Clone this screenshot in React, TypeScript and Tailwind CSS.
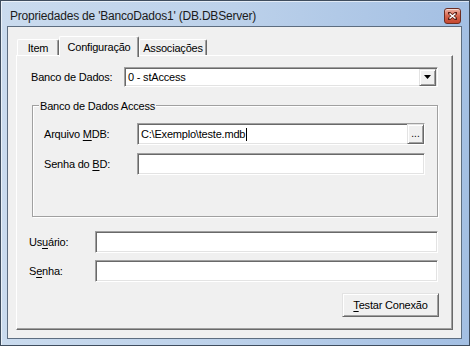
import React from 'react';

const sunken =
  'bg-white border border-t-[#a0a0a0] border-l-[#a0a0a0] border-b-white border-r-white shadow-[inset_1px_1px_0_#696969,inset_-1px_-1px_0_#e3e3e3]';
const raised =
  'bg-[#f0f0f0] border border-t-[#e3e3e3] border-l-[#e3e3e3] border-b-[#696969] border-r-[#696969] shadow-[inset_1px_1px_0_#ffffff,inset_-1px_-1px_0_#a0a0a0]';

const U: React.FC<{ children: React.ReactNode }> = ({ children }) => (
  <span className="underline underline-offset-[2px] decoration-1">{children}</span>
);

const Field: React.FC<{ width: string; children?: React.ReactNode }> = ({ width, children }) => (
  <div className={`${sunken} ${width} h-[22px] flex items-center`}>{children}</div>
);

const App: React.FC = () => {
  return (
    <div className="w-[470px] h-[346px] border border-[#3f4d5e] bg-gradient-to-r from-[#cadbee] via-[#bcd1ea] to-[#a3bfe3] shadow-[inset_1px_1px_0_rgba(255,255,255,0.6)] flex flex-col pl-[6px] pr-[7px] pb-[6px] font-['Liberation_Sans',Arial,sans-serif] text-[11px] tracking-[-0.2px] text-black">
      {/* title bar */}
      <div className="h-[25px] flex items-center justify-between pt-[4px] pl-[3px] pr-[1px]">
        <span className="text-[12px] tracking-[-0.2px] text-[#1b1b1b]">Propriedades de 'BancoDados1' (DB.DBServer)</span>
        <div className="w-[17px] h-[16px] rounded-[3px] border border-[#6d2d22] bg-gradient-to-b from-[#eeb3a5] via-[#d6644d] to-[#c5472f] flex items-center justify-center shadow-[inset_0_1px_0_rgba(255,255,255,0.5)]">
          <svg width="9" height="8" viewBox="0 0 9 8">
            <path d="M1 1 L8 7 M8 1 L1 7" stroke="#5a1c12" strokeWidth="3" strokeLinecap="square" />
            <path d="M1.5 1.5 L7.5 6.5 M7.5 1.5 L1.5 6.5" stroke="#ffffff" strokeWidth="1.6" />
          </svg>
        </div>
      </div>

      {/* client area */}
      <div className="h-[313px] border border-[#5d6d80] bg-[#f0f0f0] flex flex-col">
        {/* tabs */}
        <div className="mt-[9px] h-[19px] pl-[9px] flex items-end">
          <div className="w-[42px] h-[16px] border-t border-l border-t-white border-l-white border-r border-r-[#696969] shadow-[inset_-1px_0_0_#a0a0a0] rounded-tl-[2px] rounded-tr-[2px] flex items-center justify-center pt-[1px]">
            Item
          </div>
          <div className="relative z-10 w-[80px] h-[21px] -mb-[2px] bg-[#f0f0f0] border-t border-l border-t-white border-l-white border-r border-r-[#696969] shadow-[inset_-1px_0_0_#a0a0a0] rounded-tl-[2px] rounded-tr-[2px] flex items-start justify-center pt-[2px]">
            Configuração
          </div>
          <div className="w-[68px] h-[16px] border-t border-l border-t-white border-l-white border-r border-r-[#696969] shadow-[inset_-1px_0_0_#a0a0a0] rounded-tl-[2px] rounded-tr-[2px] flex items-center justify-center pt-[1px]">
            Associações
          </div>
        </div>

        {/* tab panel */}
        <div className="ml-[8px] w-[437px] h-[275px] border border-t-white border-l-white border-r-[#696969] border-b-[#696969] shadow-[inset_-1px_-1px_0_#a0a0a0] flex flex-col">
          <div className="mt-[11px] pl-[14px] flex items-center">
            <span className="w-[93px]">Banco de Dados:</span>
            <div className={`${sunken} w-[314px] h-[20px] flex items-center pl-[3px] pr-[1px]`}>
              <span className="flex-1">0 - stAccess</span>
              <div className={`${raised} w-[17px] h-[17px] flex items-center justify-center`}>
                <svg width="7" height="4" viewBox="0 0 7 4">
                  <path d="M0 0 H7 L3.5 4 Z" fill="#000" />
                </svg>
              </div>
            </div>
          </div>

          {/* group box */}
          <div className="relative mt-[18px] ml-[15px] w-[406px] h-[112px] border border-[#a0a0a0] shadow-[inset_1px_1px_0_#ffffff,1px_1px_0_#ffffff] flex flex-col">
            <span className="absolute left-[6px] -top-[8px] px-[1px] bg-[#f0f0f0]">Banco de Dados Access</span>
            <div className="mt-[17px] pl-[11px] flex items-center">
              <span className="w-[93px]">
                Arquivo <U>M</U>DB:
              </span>
              <Field width="w-[288px]">
                <span className="flex-1 pl-[3px] flex items-center">
                  C:\Exemplo\teste.mdb
                  <span className="inline-block w-[1px] h-[13px] bg-black ml-[1px]" />
                </span>
                <div className={`${raised} w-[17px] h-[20px] flex items-end justify-center pb-[4px] text-[10px] leading-none tracking-[0px]`}>
                  ...
                </div>
              </Field>
            </div>
            <div className="mt-[8px] pl-[11px] flex items-center">
              <span className="w-[93px]">
                Senha do <U>B</U>D:
              </span>
              <Field width="w-[288px]" />
            </div>
          </div>

          <div className="mt-[14px] pl-[12px] flex items-center">
            <span className="w-[66px]">
              Us<U>u</U>ário:
            </span>
            <Field width="w-[343px]" />
          </div>
          <div className="mt-[7px] pl-[12px] flex items-center">
            <span className="w-[66px]">
              S<U>e</U>nha:
            </span>
            <Field width="w-[343px]" />
          </div>

          <div className="mt-[11px] ml-[325px]">
            <div className={`${raised} w-[97px] h-[24px] flex items-center justify-center`}>
              <span>
                <U>T</U>estar Conexão
              </span>
            </div>
          </div>
        </div>
      </div>
    </div>
  );
};

export default App;
